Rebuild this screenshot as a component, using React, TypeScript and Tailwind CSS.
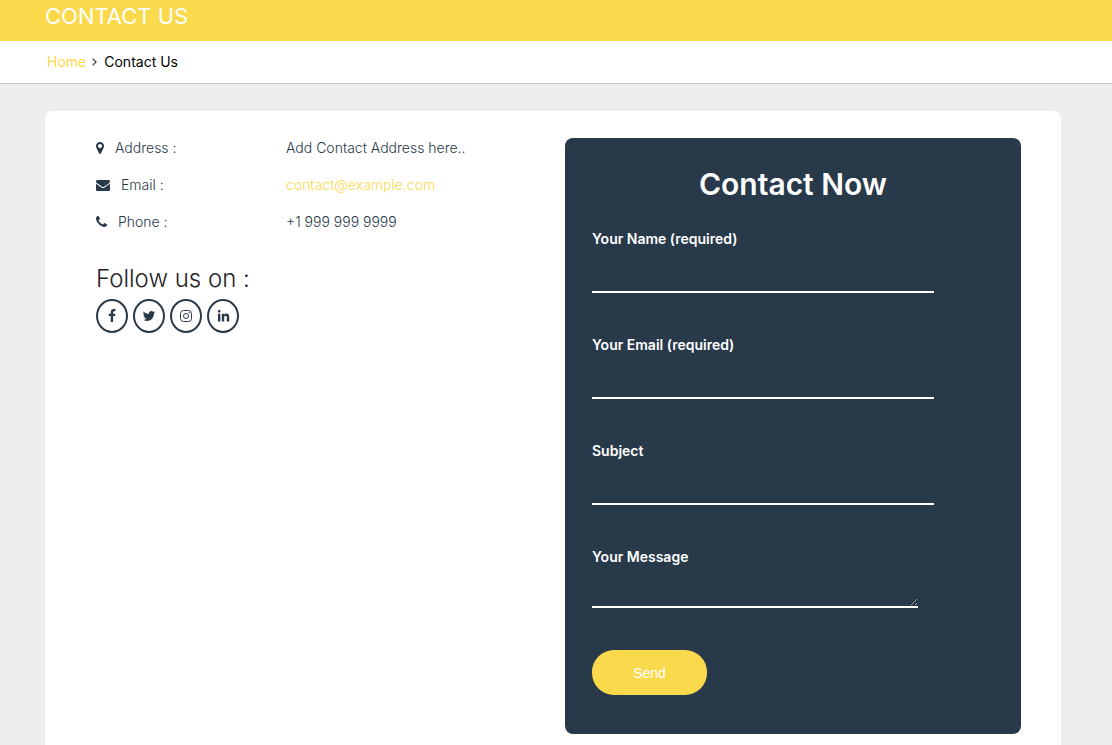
import React from 'react';
import { FaLinkedinIn } from 'react-icons/fa';

const ICONS = {
  marker:
    'M1152 640q0-106-75-181t-181-75-181 75-75 181 75 181 181 75 181-75 75-181zm256 0q0 109-33 179l-364 774q-16 33-47.5 52t-67.5 19-67.5-19-46.5-52l-365-774q-33-70-33-179 0-212 150-362t362-150 362 150 150 362z',
  envelope:
    'M1792 710v794q0 66-47 113t-113 47h-1472q-66 0-113-47t-47-113v-794q44 49 101 87 362 246 497 345 57 42 92.5 65.5t94.5 48 110 24.5h2q51 0 110-24.5t94.5-48 92.5-65.5q170-123 498-345 57-39 100-87zm0-294q0 79-49 151t-122 123q-376 261-468 325-10 7-42.5 31t-54 38.5-52 32.5-57.5 27-50 9h-2q-23 0-50-9t-57.5-27-52-32.5-54-38.5-42.5-31q-91-64-262-182.5t-205-142.5q-62-42-117-115.5t-55-136.5q0-78 41.5-130t118.5-52h1472q65 0 112.5 47t47.5 113z',
  phone:
    'M1600 1240q0 27-10 70.5t-21 68.5q-21 50-122 106-94 51-186 51-27 0-53-3.5t-57.5-12.5-47-14.5-55.5-20.5-49-18q-98-35-175-83-127-79-264-216t-216-264q-48-77-83-175-3-9-18-49t-20.5-55.5-14.5-47-12.5-57.5-3.5-53q0-92 51-186 56-101 106-122 25-11 68.5-21t70.5-10q14 0 21 3 18 6 53 76 11 19 30 54t35 63.5 31 53.5q3 4 17.5 25t21.5 35.5 7 28.5q0 20-28.5 50t-62 55-62 53-28.5 46q0 9 5 22.5t8.5 20.5 14 24 11.5 19q76 137 174 235t235 174q2 1 19 11.5t24 14 20.5 8.5 22.5 5q18 0 46-28.5t53-62 55-62 50-28.5q14 0 28.5 7t35.5 21.5 25 17.5q25 15 53.5 31t63.5 35 54 30q70 35 76 53 3 7 3 21z',
  facebook:
    'M1343 12v264h-157q-86 0-116 36t-30 108v189h293l-39 296h-254v759h-306v-759h-255v-296h255v-218q0-186 104-288.5t277-102.5q147 0 228 12z',
  twitter:
    'M1684 408q-67 98-162 167 1 14 1 42 0 130-38 259.5t-115.5 248.5-184.5 210.5-258 146-323 54.5q-271 0-496-145 35 4 78 4 225 0 401-138-105-2-188-64.5t-114-159.5q33 5 61 5 43 0 85-11-112-23-185.5-111.5t-73.5-205.5v-4q68 38 146 41-66-44-105-115t-39-154q0-88 44-163 121 149 294.5 238.5t371.5 99.5q-8-38-8-74 0-134 94.5-228.5t228.5-94.5q140 0 236 102 109-21 205-78-37 115-142 178 93-10 186-50z',
};

interface IconProps {
  path: string;
  viewBox?: string;
  className?: string;
}

function Icon({ path, viewBox = '0 0 1792 1792', className }: IconProps) {
  return (
    <svg viewBox={viewBox} fill="currentColor" aria-hidden="true" className={className}>
      <path d={path} />
    </svg>
  );
}

function InstagramIcon() {
  return (
    <svg viewBox="0 0 14 14" fill="none" stroke="currentColor" aria-hidden="true" className="size-3.5">
      <rect x="1.5" y="1.5" width="11" height="11" rx="3" />
      <circle cx="7" cy="7" r="2.5" />
      <circle cx="10.2" cy="3.8" r="0.7" fill="currentColor" stroke="none" />
    </svg>
  );
}

const details = [
  {
    label: 'Address :',
    icon: <Icon path={ICONS.marker} viewBox="384 0 1024 1792" className="h-3.5 w-2" />,
    value: 'Add Contact Address here..',
  },
  {
    label: 'Email :',
    icon: <Icon path={ICONS.envelope} className="size-3.5" />,
    value: (
      <a href="mailto:contact@example.com" className="text-[#fbd94d]">
        contact@example.com
      </a>
    ),
  },
  {
    label: 'Phone :',
    icon: <Icon path={ICONS.phone} viewBox="192 0 1408 1792" className="h-3.5 w-[11px]" />,
    value: '+1 999 999 9999',
  },
];

const socials = [
  { name: 'Facebook', icon: <Icon path={ICONS.facebook} className="size-3.5" /> },
  { name: 'Twitter', icon: <Icon path={ICONS.twitter} className="size-3.5" /> },
  { name: 'Instagram', icon: <InstagramIcon /> },
  { name: 'LinkedIn', icon: <FaLinkedinIn size={13} /> },
];

const fields = [
  { id: 'name', label: 'Your Name (required)', type: 'text', required: true },
  { id: 'email', label: 'Your Email (required)', type: 'email', required: true },
  { id: 'subject', label: 'Subject', type: 'text', required: false },
];

function ContactDetails() {
  return (
    <section className="text-[#28394a]">
      <dl className="-mt-[9px] text-sm font-light">
        {details.map((item) => (
          <div key={item.label} className="flex h-[37px] items-center">
            <dt className="flex w-[190px] shrink-0 items-center gap-[11px]">
              {item.icon}
              {item.label}
            </dt>
            <dd>{item.value}</dd>
          </div>
        ))}
      </dl>
      <h2 className="mt-[21px] text-2xl leading-9 font-light text-[#222]">Follow us on :</h2>
      <ul className="mt-0.5 flex gap-[5px]">
        {socials.map((social) => (
          <li key={social.name}>
            <a
              href="#"
              aria-label={social.name}
              className="flex h-[34px] w-8 items-center justify-center rounded-[50%] border-2 border-[#28394a]"
            >
              {social.icon}
            </a>
          </li>
        ))}
      </ul>
    </section>
  );
}

function ContactForm() {
  return (
    <form
      onSubmit={(e) => e.preventDefault()}
      className="rounded-lg bg-[#28394a] px-[27px] pt-[26px] pb-[39px] text-sm text-white"
    >
      <h2 className="mb-[25px] text-center text-[30px] leading-10 font-semibold">Contact Now</h2>
      {fields.map((field) => (
        <div key={field.id} className="mb-[42px]">
          <label htmlFor={field.id} className="block leading-5 font-semibold">
            {field.label}
          </label>
          <input
            id={field.id}
            type={field.type}
            required={field.required}
            className="block h-11 w-[85%] border-b-2 border-white bg-transparent outline-none"
          />
        </div>
      ))}
      <div className="mb-[42px]">
        <label htmlFor="message" className="block leading-5 font-semibold">
          Your Message
        </label>
        <textarea
          id="message"
          className="block h-[41px] w-[81%] resize border-b-2 border-white bg-transparent outline-none"
        />
      </div>
      <button
        type="submit"
        className="block h-[45px] w-[115px] cursor-pointer rounded-[22px] bg-[#fbd94d] font-['Liberation_Sans',sans-serif] text-sm"
      >
        Send
      </button>
    </form>
  );
}

export default function App() {
  return (
    <div className="flex min-h-screen flex-col bg-[#ededed] font-['Inter',sans-serif]">
      <header className="bg-[#fbd94d] pb-[9px] pl-[45px]">
        <h1 className="text-[22px] leading-8 text-white">CONTACT US</h1>
      </header>
      <nav aria-label="Breadcrumb" className="border-b border-[#c8c8c8] bg-white pl-[47px]">
        <ol className="flex h-[42px] items-center text-sm text-black">
          <li>
            <a href="#" className="text-[#fbd94d]">
              Home
            </a>
          </li>
          <li aria-hidden="true" className="mr-[7px] ml-1.5">
            <svg viewBox="0 0 5 8" fill="none" stroke="#28394a" strokeWidth="1.2" className="h-2 w-[5px]">
              <path d="M0.7 0.7 4 4 0.7 7.3" />
            </svg>
          </li>
          <li aria-current="page">Contact Us</li>
        </ol>
      </nav>
      <main className="flex grow flex-col pt-[27px] pr-[51px] pl-[45px]">
        <div className="grid grow grid-cols-1 items-start gap-y-8 rounded-t-lg bg-white pt-[27px] pr-10 pb-[11px] pl-[51px] md:grid-cols-[469fr_456fr]">
          <ContactDetails />
          <ContactForm />
        </div>
      </main>
    </div>
  );
}
